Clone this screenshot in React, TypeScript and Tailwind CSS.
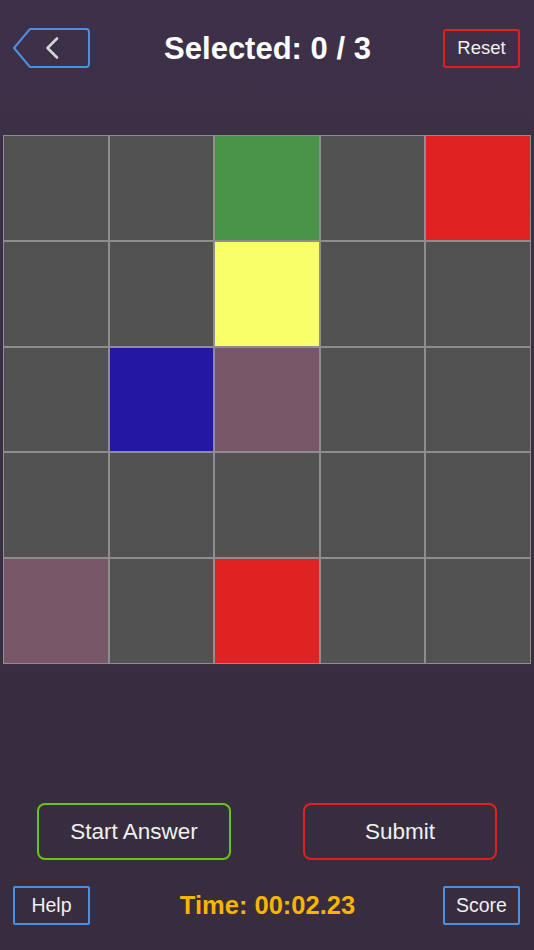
import React from "react";

const cells: string[] = [
  "bg-[#525252]", "bg-[#525252]", "bg-[#4a9449]", "bg-[#525252]", "bg-[#e02222]",
  "bg-[#525252]", "bg-[#525252]", "bg-[#f9ff68]", "bg-[#525252]", "bg-[#525252]",
  "bg-[#525252]", "bg-[#2418a2]", "bg-[#785868]", "bg-[#525252]", "bg-[#525252]",
  "bg-[#525252]", "bg-[#525252]", "bg-[#525252]", "bg-[#525252]", "bg-[#525252]",
  "bg-[#785868]", "bg-[#525252]", "bg-[#e02222]", "bg-[#525252]", "bg-[#525252]",
];

function BackButton() {
  return (
    <button className="w-[77px] h-[40px]">
      <svg width="77" height="40" viewBox="0 0 77 40" fill="none">
        <path
          d="M17 1 H73 Q76 1 76 4 V36 Q76 39 73 39 H17 L1 20 Z"
          stroke="#4a8fe0"
          strokeWidth="2"
          strokeLinejoin="round"
        />
        <path
          d="M44 10.5 L34.5 20 L44 29.5"
          stroke="#d4d4d4"
          strokeWidth="2.6"
          strokeLinecap="round"
          strokeLinejoin="round"
        />
      </svg>
    </button>
  );
}

export default function App() {
  return (
    <div
      className="w-[534px] h-[950px] flex flex-col bg-gradient-to-b from-[#3d3048] to-[#372d3e] text-white overflow-hidden"
      style={{ fontFamily: "'Liberation Sans', Arial, sans-serif" }}
    >
      <div className="flex items-center justify-between pt-[28px] pl-[13px] pr-[14px] h-[68px]">
        <BackButton />
        <div className="text-[31px] font-bold leading-none ml-[2px]">Selected: 0 / 3</div>
        <button className="w-[77px] h-[39px] border-2 border-[#e02020] rounded-[3px] text-[18.5px] text-[#f0f0f0]">
          Reset
        </button>
      </div>

      <div className="mt-[67px] ml-[3px] w-[528px] grid grid-cols-5">
        {cells.map((c, i) => (
          <div key={i} className={`h-[105.8px] border border-[#8e8e8e] ${c}`} />
        ))}
      </div>

      <div className="mt-[139px] flex justify-between pl-[37px] pr-[37px]">
        <button className="w-[194px] h-[57px] border-2 border-[#6cc21c] rounded-[8px] text-[22.5px] text-[#f0f0f0]">
          Start Answer
        </button>
        <button className="w-[194px] h-[57px] border-2 border-[#e02020] rounded-[8px] text-[22.5px] text-[#f0f0f0]">
          Submit
        </button>
      </div>

      <div className="mt-[26px] flex items-center justify-between pl-[13px] pr-[14px]">
        <button className="w-[77px] h-[39px] border-2 border-[#4a8fe0] rounded-[2px] text-[19.5px] text-[#f0f0f0]">
          Help
        </button>
        <div className="text-[25.5px] font-bold text-[#f7b500] leading-none ml-[2px]">Time: 00:02.23</div>
        <button className="w-[77px] h-[39px] border-2 border-[#4a8fe0] rounded-[2px] text-[19.5px] text-[#f0f0f0]">
          Score
        </button>
      </div>
    </div>
  );
}
